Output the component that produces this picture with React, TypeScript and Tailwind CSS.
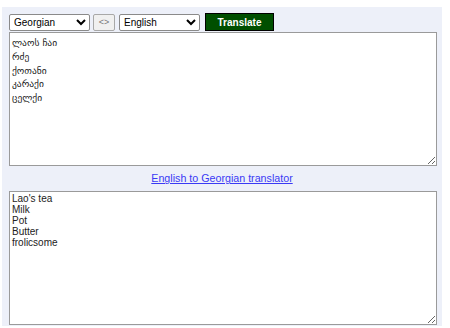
import React from "react";

const georgian = ["ლაოს ჩაი", "რძე", "ქოთანი", "კარაქი", "ცელქი"];
const english = ["Lao's tea", "Milk", "Pot", "Butter", "frolicsome"];

export default function App() {
  return (
    <div className="h-[328px] w-[450px] bg-white pt-[7px] pl-[2px] font-['Liberation_Sans',Arial,sans-serif]">
      <div className="flex h-[319px] w-[440px] flex-col bg-[#edf0f9] px-[7px] pt-[6px]">
        <div className="flex h-[18px] items-center">
          <select
            defaultValue="Georgian"
            className="h-[17px] w-[81px] rounded-[2px] border border-[#8a8a8a] bg-white px-0 text-[10px] text-black"
          >
            <option>Georgian</option>
            <option>English</option>
          </select>
          <button className="ml-[3px] h-[17px] w-[22px] rounded-[2px] border border-[#a8a8a8] bg-[#f0f0f0] text-[9px] leading-none text-[#777]">
            &lt;&gt;
          </button>
          <select
            defaultValue="English"
            className="ml-[4px] h-[17px] w-[81px] rounded-[2px] border border-[#8a8a8a] bg-white px-0 text-[10px] text-black"
          >
            <option>English</option>
            <option>Georgian</option>
          </select>
          <button className="ml-[5px] h-[18px] w-[69px] border border-black bg-[#004f00] text-[10px] font-bold text-white">
            Translate
          </button>
        </div>
        <textarea
          readOnly
          defaultValue={georgian.join("\n")}
          className="mt-[1px] h-[134px] w-[428px] resize-y border border-[#9a9a9a] bg-white px-[2px] py-[3px] font-['DejaVu_Sans',sans-serif] text-[9.5px] leading-[13.8px] text-[#222] outline-none"
        />
        <div className="flex h-[25px] items-center justify-center">
          <a href="#" className="text-[10.7px] text-[#3a3af5] underline">
            English to Georgian translator
          </a>
        </div>
        <textarea
          readOnly
          defaultValue={english.join("\n")}
          className="h-[134px] w-[428px] resize-y border border-[#9a9a9a] bg-white px-[2px] py-[1px] text-[10px] leading-[11px] text-[#222] outline-none"
        />
      </div>
    </div>
  );
}
